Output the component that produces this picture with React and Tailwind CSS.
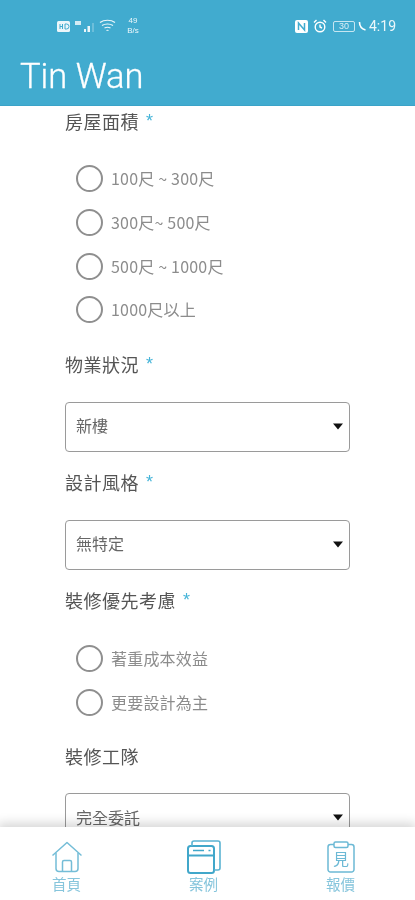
const cjk = { fontFamily: '"Noto Sans CJK TC", "Noto Sans CJK SC", sans-serif' };

function Label({ text, star = true, className = "" }) {
  return (
    <div className={`h-[30px] flex items-center text-[18px] text-[#555] tracking-[0.5px] ${className}`}>
      <span>{text}</span>
      {star && <span className="ml-[7px] text-[#45b4d8] text-[18px]" style={{ fontFamily: '"Liberation Sans", sans-serif' }}>*</span>}
    </div>
  );
}

function Radio({ text }) {
  return (
    <div className="h-[43.7px] flex items-center pl-[10.5px]">
      <span className="w-[27px] h-[27px] rounded-full border-2 border-[#8f8f8f] shrink-0" />
      <span className="ml-[8.5px] text-[16px] tracking-[0.2px] text-[#8c8c8c] -mt-[1px]">{text}</span>
    </div>
  );
}

function Select({ value, className = "" }) {
  return (
    <div className={`h-[50px] shrink-0 rounded-[4px] border border-[#9a9a9a] bg-white flex items-center justify-between pl-[10px] pr-[6px] ${className}`}>
      <span className="text-[16px] text-[#666] -mt-[3px]">{value}</span>
      <svg width="10" height="7" viewBox="0 0 10 7" className="-mt-[1px]"><path d="M0 0.5h10L5 6.500z" fill="#111" /></svg>
    </div>
  );
}

function StatusBar() {
  return (
    <div className="h-[40px] pt-[14px] pl-[57px] pr-[19px] flex items-start justify-between text-white">
      <div className="flex items-center h-[24px] gap-[3px] opacity-90">
        <svg width="13" height="11" viewBox="0 0 13 11"><rect width="13" height="11" rx="1.5" fill="#fff" /><path d="M3 3v5M3 5.500h2.500M5.500 3v5M8 3v5h1.500a2 2 0 0 0 0-5z" stroke="#41abcf" fill="none" strokeWidth="1" /></svg>
        <svg width="20" height="13" viewBox="0 0 20 13" className="ml-[1px]">
          <path d="M1 1h6v4H1z" fill="#fff" opacity=".85" />
          <path d="M10 9h2v3h-2zM13.500 6h2.500v6h-2.500z" fill="#fff" /><path d="M18.500 3h1v9h-1z" fill="#fff" opacity=".5" />
        </svg>
        <svg width="17" height="14" viewBox="0 0 17 14" fill="none" stroke="#fff" strokeWidth="1.2" className="ml-[2px]">
          <path d="M1 3.500c4-3 11-3 15 0M3 6.500c3-2 8-2 11 0M5.500 9c2-1 4-1 6 0M7.500 11.500c.8-.4 1.200-.4 2 0" />
        </svg>
        <div className="ml-[7px] w-[14px] text-[8px] leading-[10px] text-center" style={{ fontFamily: '"Liberation Sans", sans-serif' }}>49<br />B/s</div>
      </div>
      <div className="flex items-center h-[24px]">
        <svg width="13" height="13" viewBox="0 0 13 13"><rect width="13" height="13" rx="2" fill="#fff" /><path d="M3.500 10V3l6 7V3" stroke="#41abcf" strokeWidth="1.500" fill="none" /></svg>
        <svg width="14" height="14" viewBox="0 0 14 14" fill="none" stroke="#fff" strokeWidth="1.400" className="ml-[5px]">
          <circle cx="7" cy="8" r="4.800" /><path d="M7 5.500V8l2 1M1 3.500 3.500 1M13 3.500 10.500 1" />
        </svg>
        <div className="ml-[6px] w-[22px] h-[11px] rounded-[2px] border border-white/70 text-[9px] leading-[9px] text-center text-white/80" style={{ fontFamily: '"Liberation Sans", sans-serif' }}>30</div>
        <svg width="9" height="10" viewBox="0 0 9 10" className="ml-[3px]"><path d="M1.500 1c0 4 2.500 7 6 8" stroke="#fff" strokeWidth="1.600" fill="none" /></svg>
        <span className="ml-[2px] text-[14px] leading-none text-white/90" style={{ fontFamily: 'Roboto, sans-serif' }}>4:19</span>
      </div>
    </div>
  );
}

function NavItem({ label, children }) {
  return (
    <div className="w-[137px] flex flex-col items-center">
      <div className="h-[34px] flex items-center justify-center">{children}</div>
      <span className="text-[14.5px] leading-[20px] text-[#86c5dc]">{label}</span>
    </div>
  );
}

export default function App() {
  return (
    <div className="w-[415px] h-[900px] flex flex-col overflow-hidden bg-white blur-[0.5px]" style={cjk}>
      <header className="h-[106px] shrink-0 bg-[#41abcf] border-b border-[#3ba3c8]">
        <StatusBar />
        <h1 className="pl-[20px] mt-[9px] text-[34.500px] leading-[54px] font-light text-white [-webkit-text-stroke:0.3px_white]" style={{ fontFamily: 'Roboto, sans-serif' }}>Tin Wan</h1>
      </header>

      <main className="flex-1 min-h-0 overflow-hidden px-[65px] flex flex-col">
        <Label text="房屋面積" className="shrink-0" />
        <div className="mt-[21px] shrink-0">
          <Radio text="100尺 ~ 300尺" />
          <Radio text="300尺~ 500尺" />
          <Radio text="500尺 ~ 1000尺" />
          <Radio text="1000尺以上" />
        </div>
        <Label text="物業狀況" className="mt-[18px] shrink-0" />
        <Select value="新樓" className="mt-[22px]" />
        <Label text="設計風格" className="mt-[16px] shrink-0" />
        <Select value="無特定" className="mt-[22px]" />
        <Label text="裝修優先考慮" className="mt-[16px] shrink-0" />
        <div className="mt-[21px] shrink-0">
          <Radio text="著重成本效益" />
          <Radio text="更要設計為主" />
        </div>
        <Label text="裝修工隊" star={false} className="mt-[17px] shrink-0" />
        <Select value="完全委託" className="mt-[22px]" />
      </main>

      <nav className="h-[73px] shrink-0 bg-white flex -ml-[2px] pt-[13px] shadow-[0_-4px_10px_rgba(0,0,0,0.16)] relative w-[418px]">
        <NavItem label="首頁">
          <svg width="32" height="32" viewBox="0 0 32 32" fill="none" stroke="#74bdd7" strokeWidth="1.500" strokeLinejoin="round">
            <path d="M1.500 14.500 16 1.500l14.500 13" />
            <path d="M5 12v15.500a3 3 0 0 0 3 3h16a3 3 0 0 0 3-3V12" />
            <path d="M11.500 30.500V21a1.500 1.500 0 0 1 1.500-1.500h6a1.500 1.500 0 0 1 1.500 1.500v9.500" />
          </svg>
        </NavItem>
        <NavItem label="案例">
          <svg width="34" height="34" viewBox="0 0 34 34" fill="none" stroke="#41a7ca" strokeWidth="2" strokeLinejoin="round">
            <rect x="1" y="6" width="26" height="27" rx="2.500" />
            <path d="M1 15.500h26" />
            <path d="M6 10.500h11" strokeWidth="1.500" />
            <path d="M21.500 10.500h2" strokeWidth="1.500" />
            <path d="M5 6V3a2 2 0 0 1 2-2h24a2 2 0 0 1 2 2v25a2 2 0 0 1-2 2h-4" stroke="#5ab3d2" strokeWidth="1.600" />
          </svg>
        </NavItem>
        <NavItem label="報價">
          <svg width="28" height="32" viewBox="0 0 28 32" fill="none" stroke="#6cb9d5" strokeWidth="1.500" strokeLinejoin="round">
            <path d="M7 3.500H3.500a2.500 2.500 0 0 0-2.500 2.500v22.500a2.500 2.500 0 0 0 2.500 2.500h21a2.500 2.500 0 0 0 2.500-2.500V6a2.500 2.500 0 0 0-2.500-2.500H21" />
            <rect x="7" y="1" width="14" height="5.500" rx="1.500" />
            <text x="14" y="24" textAnchor="middle" fontSize="16" fill="#6cb9d5" stroke="none" style={cjk}>見</text>
          </svg>
        </NavItem>
      </nav>
    </div>
  );
}
